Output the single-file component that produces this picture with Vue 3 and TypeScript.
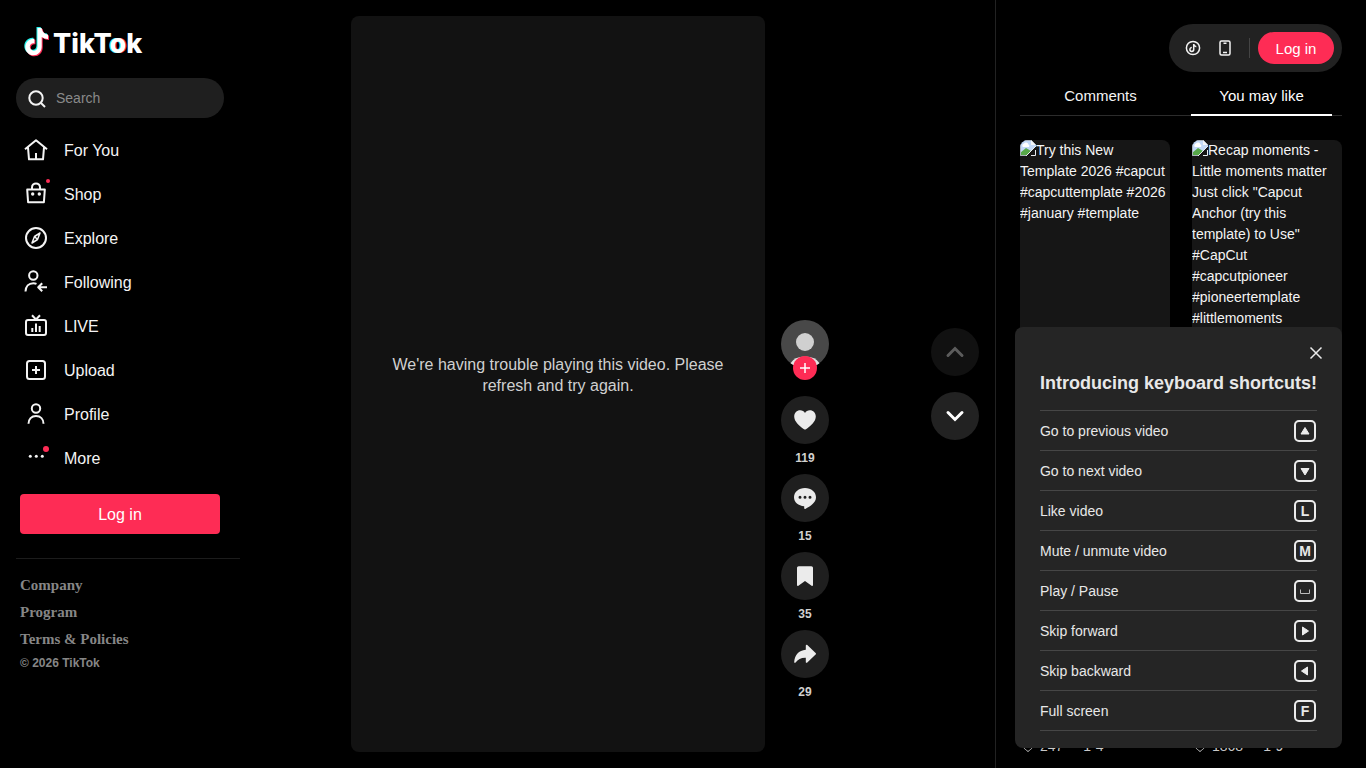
<script setup lang="ts">
import { ref } from 'vue'

interface NavItem { id: string; label: string }
interface Action { id: string; label: string; count: number; path: string }
interface Clip { id: number; text: string; likes: string; date: string }
interface Shortcut { label: string; key: string }

const query = ref('')
const tab = ref<'comments' | 'related'>('related')
const showShortcuts = ref(true)

const nav: NavItem[] = [
  { id: 'home', label: 'For You' },
  { id: 'shop', label: 'Shop' },
  { id: 'explore', label: 'Explore' },
  { id: 'following', label: 'Following' },
  { id: 'live', label: 'LIVE' },
  { id: 'upload', label: 'Upload' },
  { id: 'profile', label: 'Profile' },
  { id: 'more', label: 'More' },
]

const actions: Action[] = [
  { id: 'like', label: 'Like', count: 119, path: 'M7.2 2.3C9.3 2.3 11 3.3 12 5c1-1.7 2.7-2.7 4.8-2.7 3.4 0 6 2.6 6 6.2 0 5-5 9.500-9.800 12.700a1.800 1.800 0 0 1-2 0C6.200 18 1.200 13.500 1.200 8.500c0-3.600 2.600-6.200 6-6.200z' },
  { id: 'comment', label: 'Comment', count: 15, path: 'M12 2C5.800 2 1 6 1 11.300c0 5 4.400 8.600 10.200 8.900v2.100c0 .6.600.9 1.100.6C17.500 20.300 23 16.700 23 11.300 23 6 18.200 2 12 2zM7 9.800a1.500 1.500 0 1 1 0 3 1.500 1.500 0 0 1 0-3zm5 0a1.500 1.500 0 1 1 0 3 1.500 1.500 0 0 1 0-3zm5 0a1.500 1.500 0 1 1 0 3 1.500 1.500 0 0 1 0-3z' },
  { id: 'save', label: 'Save', count: 35, path: 'M4 4c0-1 .7-1.700 1.700-1.700h12.600c1 0 1.700.7 1.700 1.700v17c0 .8-.8 1.200-1.400.7L12 17l-6.600 4.700c-.6.500-1.400.1-1.400-.7z' },
  { id: 'share', label: 'Share', count: 29, path: 'M12.800 3.600c0-.8.9-1.200 1.500-.7l8.300 8c.6.500.6 1.200 0 1.700l-8.300 8c-.6.500-1.500.1-1.500-.7v-4.200c-4.500-.2-7.700 1.400-10.200 4.800-.5.600-1.500.3-1.400-.6.500-6.500 4.400-11.600 11.600-12.100z' },
]

const clips: Clip[] = [
  { id: 1, text: 'Try this New Template 2026 #capcut #capcuttemplate #2026 #january #template', likes: '247', date: '1-4' },
  { id: 2, text: 'Recap moments - Little moments matter Just click "Capcut Anchor (try this template) to Use" #CapCut #capcutpioneer #pioneertemplate #littlemoments', likes: '1868', date: '1-9' },
]

const shortcuts: Shortcut[] = [
  { label: 'Go to previous video', key: 'up' },
  { label: 'Go to next video', key: 'down' },
  { label: 'Like video', key: 'L' },
  { label: 'Mute / unmute video', key: 'M' },
  { label: 'Play / Pause', key: 'space' },
  { label: 'Skip forward', key: 'right' },
  { label: 'Skip backward', key: 'left' },
  { label: 'Full screen', key: 'F' },
]

const arrows: Record<string, string> = {
  up: 'M12 8.500l4 6.500H8z',
  down: 'M12 16l4-6.500H8z',
  right: 'M15.500 12L9.500 16V8z',
  left: 'M8.500 12l6 4V8z',
}

const note = 'M12.500 0h4.200c.3 3.500 2.700 6.300 6.300 6.600v4.400c-2.400 0-4.500-.7-6.300-1.900v9.400c0 5-3.600 8.800-8.200 8.800S.3 23.600.3 19s3.900-8.700 9.100-8.200v4.500c-2.500-.6-4.600 1-4.600 3.500 0 2.300 1.700 3.900 3.800 3.900 2.300 0 3.900-1.700 3.900-4.300z'
</script>

<template>
  <div class="page">
    <aside class="sidebar">
      <a class="logo" href="#" aria-label="TikTok home">
        <svg class="note" viewBox="-1 -1 27 31" aria-hidden="true">
          <path :d="note" fill="#25f4ee" />
          <path :d="note" fill="#fe2c55" transform="translate(2 2)" />
          <path :d="note" fill="#fff" transform="translate(1 1)" />
        </svg>
        <span class="word">TikT<span class="tint">o</span>k</span>
      </a>

      <label class="search">
        <svg viewBox="0 0 24 24" class="ico" aria-hidden="true"><circle cx="12" cy="12" r="6.700" /><path d="M17 17l4 4" /></svg>
        <input v-model="query" type="search" placeholder="Search" aria-label="Search" />
      </label>

      <nav class="nav">
        <a v-for="item in nav" :key="item.id" href="#" class="nav-item">
          <svg viewBox="0 0 24 24" class="ico" aria-hidden="true">
            <path v-if="item.id === 'home'" d="M1 11.200L12 2.200l11 9M4 9.500l1 11.800h14l1-11.800M12 15v6" />
            <template v-else-if="item.id === 'shop'">
              <path d="M3.200 7.600h17.600l-.9 12.700H4.100zM8 7.500V5.400a4 4 0 0 1 8 0v2.100" />
              <circle cx="8.700" cy="12" r="1.700" class="fill" /><circle cx="15.300" cy="12" r="1.700" class="fill" />
              <circle cx="24" cy="-1" r="2" class="red" />
            </template>
            <template v-else-if="item.id === 'explore'">
              <circle cx="12" cy="12" r="10" />
              <path d="M16 7l-5.500 3.500L8 17l5.500-3.500zM10.500 10.500l3 3" class="thin" />
            </template>
            <template v-else-if="item.id === 'following'">
              <circle cx="9.300" cy="5.500" r="4.200" />
              <path d="M1.500 21.500c.2-5 3.100-8.300 7.800-8.300 1.200 0 2.300.2 3.200.6M23 17.200h-8.500M18.200 13.200l-4 4 4 4" />
            </template>
            <template v-else-if="item.id === 'live'">
              <rect x="2" y="6" width="20" height="15" rx="2" />
              <path d="M8 1.200l4 4.300 4-4.300M8.300 14v4M12 9.500V18M15.700 12v6" />
            </template>
            <template v-else-if="item.id === 'upload'">
              <rect x="3" y="3" width="18" height="18" rx="2.500" />
              <path d="M12 8v8M8 12h8" />
            </template>
            <template v-else-if="item.id === 'profile'">
              <circle cx="12" cy="6.500" r="4.200" />
              <path d="M4.500 21.800c0-4.800 3-7.800 7.500-7.800s7.500 3 7.500 7.800" />
            </template>
            <template v-else>
              <circle cx="6.300" cy="10.300" r="1.500" class="fill" /><circle cx="12.300" cy="10.300" r="1.500" class="fill" /><circle cx="18.300" cy="10.300" r="1.500" class="fill" />
              <circle cx="22" cy="3" r="3" class="red" />
            </template>
          </svg>
          <span>{{ item.label }}</span>
        </a>
      </nav>

      <button type="button" class="login wide">Log in</button>

      <footer class="footer">
        <a href="#">Company</a>
        <a href="#">Program</a>
        <a href="#">Terms &amp; Policies</a>
        <small>© 2026 TikTok</small>
      </footer>
    </aside>

    <main class="main">
      <div class="feed">
        <section class="video">
          <p>We're having trouble playing this video. Please refresh and try again.</p>
        </section>
        <div class="actions">
          <div class="creator">
            <a href="#" class="avatar" aria-label="Creator profile">
              <svg viewBox="0 0 48 48" aria-hidden="true"><circle cx="24" cy="24" r="24" fill="#484848" /><circle cx="24" cy="22" r="9" fill="#d0d0d0" /><path d="M9.500 43.300a15.500 10.500 0 0 1 29 0A24 24 0 0 1 9.500 43.300z" fill="#e4e4e4" /></svg>
            </a>
            <button type="button" class="follow" aria-label="Follow">
              <svg viewBox="0 0 24 24" aria-hidden="true"><path d="M12 7v10M7 12h10" /></svg>
            </button>
          </div>
          <div v-for="a in actions" :key="a.id" class="action">
            <button type="button" class="round" :aria-label="a.label">
              <svg viewBox="0 0 24 24" aria-hidden="true"><path :d="a.path" fill-rule="evenodd" /></svg>
            </button>
            <strong>{{ a.count }}</strong>
          </div>
        </div>
      </div>
      <div class="pager">
        <button type="button" class="round" disabled aria-label="Previous video">
          <svg viewBox="0 0 24 24" class="chev" aria-hidden="true"><path d="M5 15.500l7-7 7 7" /></svg>
        </button>
        <button type="button" class="round" aria-label="Next video">
          <svg viewBox="0 0 24 24" class="chev" aria-hidden="true"><path d="M5 8.500l7 7 7-7" /></svg>
        </button>
      </div>
    </main>

    <aside class="panel">
      <div class="pill">
        <button type="button" class="tool" aria-label="Get coins">
          <svg viewBox="0 0 16 16" class="ico" aria-hidden="true"><circle cx="8" cy="8" r="6.600" /><path d="M8.700 4v5.500a1.900 1.900 0 1 1-1.900-1.900M8.700 4.200c.2 1.500 1.100 2.300 2.600 2.500" /></svg>
        </button>
        <button type="button" class="tool" aria-label="Get app">
          <svg viewBox="0 0 16 16" class="ico" aria-hidden="true"><rect x="3" y="1" width="10" height="14" rx="1.500" /><path d="M6.500 3.200h3M6 12.500h4" /></svg>
        </button>
        <i class="bar"></i>
        <button type="button" class="login small">Log in</button>
      </div>

      <div class="tabs" role="tablist">
        <button type="button" role="tab" :aria-selected="tab === 'comments'" :class="{ on: tab === 'comments' }" @click="tab = 'comments'">Comments</button>
        <button type="button" role="tab" :aria-selected="tab === 'related'" :class="{ on: tab === 'related' }" @click="tab = 'related'">You may like</button>
      </div>

      <div class="clips">
        <article v-for="c in clips" :key="c.id" class="clip">
          <a href="#" class="thumb">
            <svg class="broken" viewBox="0 0 16 16" aria-hidden="true">
              <path d="M0 0h11l5 5v1L6 16H0z" fill="#c3d9f7" />
              <path d="M0 16v-3l6-5 5 3-5 5z" fill="#57a849" />
              <path d="M3 7a2 2 0 0 1 1-3.500 2.500 2.500 0 0 1 4.500 1A1.700 1.700 0 0 1 9 7z" fill="#fff" />
              <path d="M6 15.500H.5V.5H11l4.500 5" fill="none" stroke="#a9b1ba" />
              <path d="M11 0v5h5z" fill="#f2f5f8" />
              <path d="M16 6L6 16M15.500 10v5.500H11" fill="none" stroke="#e8ecf0" />
            </svg>{{ c.text }}
          </a>
          <div class="stats">
            <svg viewBox="0 0 16 16" class="ico" aria-hidden="true"><path d="M8 13.500C4 10.500 2 8.500 2 6a3 3 0 0 1 6-1 3 3 0 0 1 6 1c0 2.500-2 4.500-6 7.500z" /></svg>
            <span>{{ c.likes }}</span><time>{{ c.date }}</time>
          </div>
        </article>
      </div>
    </aside>

    <section v-if="showShortcuts" class="dialog" role="dialog" aria-labelledby="shortcut-title">
      <button type="button" class="close" aria-label="Close" @click="showShortcuts = false">
        <svg viewBox="0 0 16 16" aria-hidden="true"><path d="M2.500 2.500l11 11M13.500 2.500l-11 11" /></svg>
      </button>
      <h2 id="shortcut-title">Introducing keyboard shortcuts!</h2>
      <ul>
        <li v-for="s in shortcuts" :key="s.label">
          <span>{{ s.label }}</span>
          <kbd>
            <svg v-if="arrows[s.key]" viewBox="0 0 24 24" aria-hidden="true"><path :d="arrows[s.key]" /></svg>
            <svg v-else-if="s.key === 'space'" viewBox="0 0 24 24" aria-hidden="true"><path d="M7.500 10.500v4h9v-4" class="space" /></svg>
            <template v-else>{{ s.key }}</template>
          </kbd>
        </li>
      </ul>
    </section>
  </div>
</template>

<style>
body { background: #000; }
</style>

<style scoped>
* { box-sizing: border-box; }
.page { display: flex; height: 100vh; overflow: hidden; background: #000; color: #f4f4f4; font-family: "Liberation Sans", Arial, sans-serif; }
a { color: inherit; text-decoration: none; }
button { font: inherit; color: inherit; border: 0; padding: 0; background: none; cursor: pointer; display: flex; align-items: center; justify-content: center; }
svg { display: block; flex: none; overflow: visible; }
.ico { width: 24px; height: 24px; fill: none; stroke: currentColor; stroke-width: 2; stroke-linejoin: round; }
.ico .fill { fill: currentColor; stroke: none; }
.ico .red { fill: #fe2c55; stroke: none; }
.ico .thin { stroke-width: 1.500; }

.sidebar { flex: 0 0 240px; min-width: 0; padding: 24px 0 0 16px; }
.logo { display: flex; align-items: flex-start; gap: 3px; height: 40px; margin-left: 7px; color: #fff; }
.note { width: 27px; height: 31px; margin-top: 2px; }
.word { font: 800 27px/40px Inter, sans-serif; }
.tint { text-shadow: -1px 0 #25f4ee, 1px 0 #fe2c55; }
.search { display: flex; align-items: center; gap: 8px; height: 40px; margin: 14px 16px 12px 0; padding: 0 8px; border-radius: 20px; background: #1f1f1f; }
.search input { flex: 1; min-width: 0; width: 0; border: 0; outline: 0; padding: 0; background: none; color: #fff; font: 14px/20px "Liberation Sans", Arial, sans-serif; appearance: none; }
.search input::placeholder { color: #8a8a8a; opacity: 1; }
.nav-item { display: flex; align-items: center; gap: 16px; height: 40px; margin-bottom: 4px; padding-left: 8px; font-size: 16px; line-height: 21px; }
.login { background: #fe2c55; color: #fff; }
.wide { width: 200px; height: 40px; margin: 16px 0 0 4px; border-radius: 4px; font-size: 16px; line-height: 21px; }
.footer { display: flex; flex-direction: column; margin-top: 24px; padding: 17px 0 0 4px; border-top: 1px solid #1c1c1c; color: #868686; font: bold 15px/19px "Liberation Serif", serif; }
.footer a { margin-bottom: 8px; }
.footer small { margin-top: -2px; font: bold 12px/16px "Liberation Sans", Arial, sans-serif; }

.main { flex: 1; min-width: 0; display: flex; align-items: center; padding: 16px 16px 16px 9px; }
.feed { flex: 1; display: flex; justify-content: center; gap: 16px; height: 100%; }
.video { height: 100%; aspect-ratio: 9 / 16; display: flex; align-items: center; padding: 0 36px 18px; border-radius: 8px; background: #121212; }
.video p { margin: 0; text-align: center; font-size: 16px; line-height: 21px; color: #d0d0d0; }
.actions { display: flex; flex-direction: column; justify-content: flex-end; padding-bottom: 44px; }
.creator { position: relative; height: 76px; }
.avatar svg { width: 48px; height: 48px; }
.follow { position: absolute; left: 12px; top: 36px; width: 24px; height: 24px; border-radius: 50%; background: #fe2c55; }
.follow svg { width: 24px; height: 24px; stroke: #fff; stroke-width: 1.500; }
.action { height: 78px; text-align: center; font-size: 12px; line-height: 16px; color: #d0d0d0; }
.action strong { display: block; margin-top: 6px; }
.round { width: 48px; height: 48px; border-radius: 50%; background: #1f1f1f; }
.round svg { width: 24px; height: 24px; fill: #ebebeb; }
.round .chev { fill: none; stroke: #fff; stroke-width: 3; stroke-linecap: round; stroke-linejoin: miter; }
.pager { display: flex; flex-direction: column; gap: 16px; }
.pager .round { background: #222; }
.pager .round:disabled { background: #111; }
.pager .round:disabled .chev { stroke: #5c5c5c; }

.panel { flex: 0 0 371px; display: flex; flex-direction: column; padding: 24px 24px 13px; border-left: 1px solid #222; }
.pill { align-self: flex-end; display: flex; align-items: center; gap: 16px; height: 48px; padding: 0 8px 0 16px; border-radius: 24px; background: #222; }
.tool .ico { width: 16px; height: 16px; stroke-width: 1.500; }
.bar { width: 1px; height: 20px; background: #444; }
.small { width: 76px; height: 32px; margin-left: -8px; border-radius: 16px; font-size: 15px; }
.tabs { display: flex; margin-bottom: 24px; padding-top: 4px; border-bottom: 1px solid #2c2c2c; font-size: 15px; line-height: 20px; }
.tabs button { position: relative; flex: 1; height: 39px; }
.tabs .on { color: #fff; }
.tabs .on::after { content: ""; position: absolute; left: 10px; right: 10px; bottom: -1px; height: 2px; background: #fff; }
.clips { flex: 1; min-height: 0; display: grid; grid-template-columns: 1fr 1fr; gap: 22px; }
.clip { display: flex; flex-direction: column; min-width: 0; min-height: 0; gap: 180px; }
.thumb { flex: 1; min-height: 0; overflow: hidden; border-radius: 8px; background: #161616; font-size: 14px; line-height: 21px; }
.broken { display: inline-block; width: 16px; height: 16px; vertical-align: top; }
.stats { display: flex; align-items: center; gap: 4px; height: 18px; font-size: 14px; color: #c8c8c8; }
.stats .ico { width: 16px; height: 16px; stroke-width: 1; }
.stats time { margin-left: 16px; }

.dialog { position: fixed; right: 24px; bottom: 20px; padding: 44px 25px 17px; border-radius: 8px; background: #252525; color: #e8e8e8; }
.close { position: absolute; top: 18px; right: 18px; width: 16px; height: 16px; }
.close svg { width: 16px; height: 16px; stroke: #ebebeb; stroke-width: 1.500; }
h2 { margin: 0 0 15px; font-size: 18px; line-height: 24px; }
ul { margin: 0; padding: 0; list-style: none; border-top: 1px solid #464646; }
li { display: flex; align-items: center; justify-content: space-between; height: 40px; border-bottom: 1px solid #464646; font-size: 14px; }
kbd { display: flex; align-items: center; justify-content: center; width: 22px; height: 22px; margin-right: 1px; border: 2px solid #ebebeb; border-radius: 5px; font: bold 14px/18px "Liberation Sans", Arial, sans-serif; }
kbd svg { width: 24px; height: 24px; fill: #ebebeb; stroke: #ebebeb; stroke-width: 1; stroke-linejoin: round; }
kbd .space { fill: none; stroke: #bbb; stroke-width: 1; }
</style>
